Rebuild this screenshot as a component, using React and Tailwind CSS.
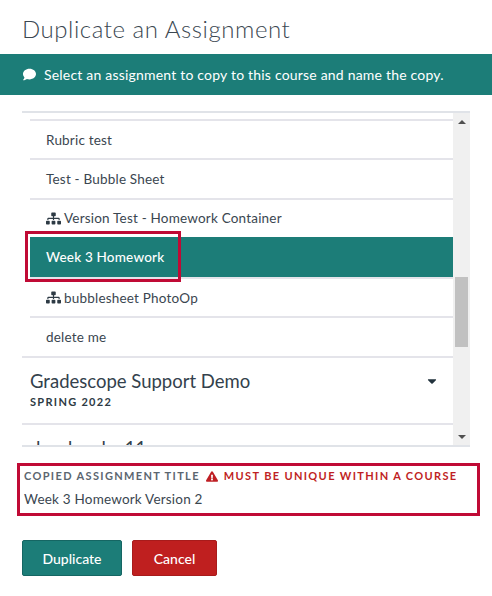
import { FaCaretDown, FaComment, FaExclamationTriangle, FaSitemap } from 'react-icons/fa';

function Row({ children, icon, selected }) {
  return (
    <div
      className={
        selected
          ? 'h-[40px] flex items-center pl-4 bg-[#1c7d78] text-white text-[13.5px] font-medium tracking-[0.2px]'
          : 'h-[39.33px] flex items-center pl-4 border-t-2 border-[#e4e4ea] text-[13.5px] text-[#3a4650] tracking-[0.2px]'
      }
    >
      {icon && <FaSitemap className="w-[15px] h-[13px] mr-[3px] text-[#2d3a44]" />}
      {children}
    </div>
  );
}

function Course({ name, term }) {
  return (
    <div className="h-[67px] border-t-2 border-[#e4e4ea] pl-2 pr-[14px] pt-[10px] shrink-0">
      <div className="flex items-center justify-between">
        <span className="text-[18.5px] leading-[26px] text-[#33414c]">{name}</span>
        <FaCaretDown className="w-[14px] h-[14px] text-[#22333d]" />
      </div>
      {term && (
        <div className="text-[11px] leading-[14px] mt-[1px] font-bold tracking-[1.3px] text-[#2d3a44]">{term}</div>
      )}
    </div>
  );
}

export default function App() {
  return (
    <div className="w-[492px] h-[596px] bg-white overflow-hidden font-['Lato',sans-serif]">
      <h1 className="h-[54px] pl-[22px] pt-[13px] text-[24px] leading-[32px] font-light tracking-[0.55px] text-[#3b4751]">
        Duplicate an Assignment
      </h1>

      <div className="h-[41px] bg-[#1c7d78] pl-[22px] flex items-center text-white text-[14px] tracking-[0.2px]">
        <FaComment className="w-[15px] h-[13px] mr-[7px]" />
        Select an assignment to copy to this course and name the copy.
      </div>

      {/* list with its scrollbar */}
      <div className="mt-4 mx-[22px] h-[336px] border-y-2 border-[#e0e3e8] flex overflow-hidden">
        <div className="flex-1 min-w-0 overflow-hidden">
          <div className="pl-2 pt-[6px]">
            <Row>Rubric test</Row>
            <Row>Test - Bubble Sheet</Row>
            <Row icon>Version Test - Homework Container</Row>
            <div className="relative">
              <Row selected>Week 3 Homework</Row>
              <div className="absolute left-[-5px] top-[-6px] w-[156px] h-[51px] border-[3px] border-[#c00a35] pointer-events-none" />
            </div>
            <Row icon>bubblesheet PhotoOp</Row>
            <Row>delete me</Row>
          </div>
          <Course name="Gradescope Support Demo" term="SPRING 2022" />
          <Course name="dev_kmclea11" />
        </div>

        <div className="w-[17px] shrink-0 bg-[#f0f0f0] flex flex-col items-center">
          <div className="h-[17px] flex items-center justify-center">
            <div className="w-0 h-0 border-x-[4px] border-x-transparent border-b-[4px] border-b-[#505050]" />
          </div>
          <div className="w-[13px] h-[70px] mt-[147px] bg-[#c1c1c1]" />
          <div className="flex-1 flex items-end pb-[6px]">
            <div className="w-0 h-0 border-x-[4px] border-x-transparent border-t-[4px] border-t-[#505050]" />
          </div>
        </div>
      </div>

      <div className="mt-4 ml-[17px] w-[463px] h-[53px] border-[3px] border-[#c00a35] pl-1 pt-[2px]">
        <div className="flex items-center text-[11px] leading-[16px] font-bold tracking-[1.35px]">
          <span className="text-[#5b6670]">COPIED ASSIGNMENT TITLE</span>
          <FaExclamationTriangle className="w-[12px] h-[11px] mx-[6px] text-[#bf1f24]" />
          <span className="text-[#bf1f24]">MUST BE UNIQUE WITHIN A COURSE</span>
        </div>
        <div className="mt-[6px] text-[13.5px] leading-[18px] tracking-[0.2px] text-[#3a4650]">
          Week 3 Homework Version 2
        </div>
      </div>

      <div className="mt-6 ml-[22px] flex gap-[10px]">
        <button className="w-[100px] h-[36px] rounded-[2px] bg-[#1c7d78] border border-[#156663] text-white text-[14px] font-medium">
          Duplicate
        </button>
        <button className="w-[85px] h-[36px] rounded-[2px] bg-[#bf1f1f] border border-[#a81b1b] text-white text-[14px] font-medium">
          Cancel
        </button>
      </div>
    </div>
  );
}
